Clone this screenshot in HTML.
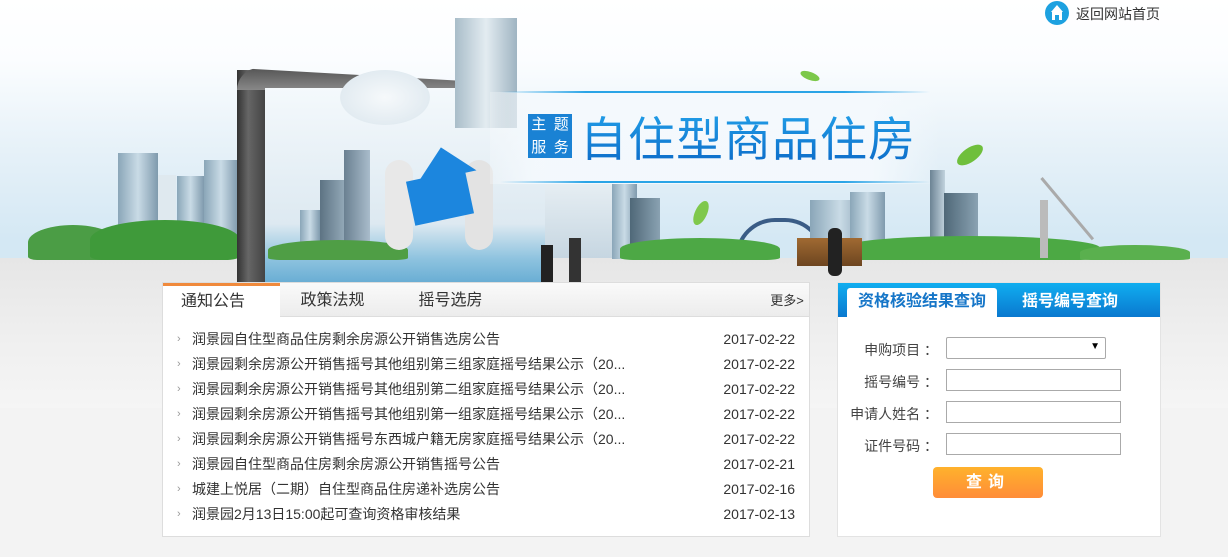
<!DOCTYPE html>
<html><head><meta charset="utf-8">
<style>
*{margin:0;padding:0;box-sizing:border-box}
body{width:1228px;height:557px;overflow:hidden;position:relative;font-family:"Liberation Sans","Noto Sans CJK SC",sans-serif;background:#f3f3f3}
.abs{position:absolute}
.sky{left:0;top:0;width:1228px;height:260px;background:linear-gradient(#fff 0,#fbfdff 60px,#e6f1f8 150px,#d4e8f4 240px)}
.ground{left:0;top:258px;width:1228px;height:150px;background:linear-gradient(#e6e6e6,#efefef 80px,#f5f5f5)}
.bld{position:absolute;background:linear-gradient(90deg,#8aa6b8,#c9dbe6 50%,#7f9aad);}
.tree{position:absolute;border-radius:50% 50% 10% 10%;background:#3f9a3a}
.panel{left:162px;top:282px;width:648px;height:255px;background:#fff;border:1px solid #ddd}
.tabs{height:34px;background:linear-gradient(#fafafa,#ececec);border-bottom:1px solid #ddd;position:relative}
.tab{position:absolute;top:0;height:34px;line-height:36px;font-size:16px;color:#333;text-align:center}
.tab.on{background:#fff;border-top:3px solid #f08a3c;line-height:32px;height:35px;width:117px;left:0;text-align:left;padding-left:18px}
li{list-style:none;position:absolute;left:14px;width:618px;font-size:14px;color:#333;height:20px;line-height:20px}
li:before{content:"›";color:#999;font-size:11px;position:absolute;left:0}
li span.t{position:absolute;left:15px}
li span.d{position:absolute;right:0}
.rp{left:837px;top:282px;width:324px;height:255px;background:#fff;border:1px solid #e3e3e3}
.rh{height:34px;background:linear-gradient(#10aef0,#0a78cf);position:relative}
.rt{position:absolute;font-size:16px;font-weight:bold;top:5px;height:29px;line-height:27px;text-align:center;color:#fff}
.lbl{position:absolute;font-size:14px;color:#444;text-align:right;width:100px;left:0}
.inp{position:absolute;left:108px;width:175px;height:22px;border:1px solid #aaa;background:#fff}
</style></head><body>
<div class="abs sky"></div>
<div class="abs ground"></div>
<!-- left city -->
<div class="bld" style="left:118px;top:153px;width:40px;height:90px"></div>
<div class="bld" style="left:158px;top:175px;width:18px;height:70px;background:#dfe9ef"></div>
<div class="bld" style="left:177px;top:176px;width:27px;height:70px"></div>
<div class="bld" style="left:204px;top:160px;width:34px;height:85px"></div>
<div class="tree" style="left:28px;top:225px;width:90px;height:35px;background:#4b9d45"></div>
<div class="tree" style="left:90px;top:220px;width:150px;height:40px"></div>
<!-- frame -->
<div class="abs" style="left:237px;top:70px;width:28px;height:212px;background:linear-gradient(90deg,#333,#666 40%,#444)"></div>
<div class="abs" style="left:237px;top:68px;width:270px;height:22px;border-radius:24px 0 0 0;background:linear-gradient(#555,#888);clip-path:polygon(0 0,100% 70%,100% 100%,0 100%)"></div>
<div class="abs" style="left:265px;top:88px;width:280px;height:194px;background:linear-gradient(#f4f9fc,#dde9f1 70%,#8ec3df 88%,#6aaed4)"></div>
<div class="bld" style="left:300px;top:210px;width:20px;height:45px"></div>
<div class="bld" style="left:320px;top:180px;width:28px;height:75px;background:linear-gradient(90deg,#5d7383,#9ab0bf)"></div>
<div class="bld" style="left:344px;top:150px;width:26px;height:105px;background:linear-gradient(90deg,#6a8091,#a9bccb)"></div>
<div class="tree" style="left:268px;top:240px;width:140px;height:20px;background:#4f9e45"></div>
<!-- tower top -->
<div class="bld" style="left:455px;top:18px;width:62px;height:110px;background:linear-gradient(90deg,#a9bdc9,#e3ecf1 50%,#9fb4c2)"></div>
<div class="abs" style="left:340px;top:70px;width:90px;height:55px;border-radius:50%;background:radial-gradient(#f6f9fb,#e2ebf1 70%,transparent 72%)"></div>
<!-- figures with house -->
<div class="abs" style="left:385px;top:160px;width:28px;height:90px;border-radius:14px;background:#e8e8e8"></div>
<div class="abs" style="left:465px;top:160px;width:28px;height:90px;border-radius:14px;background:#e3e3e3"></div>
<div class="abs" style="left:410px;top:175px;width:60px;height:45px;background:#1c86de;transform:rotate(-12deg)"></div>
<div class="abs" style="left:414px;top:147px;width:0;height:0;border-left:30px solid transparent;border-right:30px solid transparent;border-bottom:30px solid #1c86de;transform:rotate(-12deg)"></div>
<!-- banner band -->
<div class="abs" style="left:490px;top:92px;width:450px;height:92px;background:linear-gradient(90deg,rgba(255,255,255,.2),rgba(244,249,253,.95) 10%,rgba(244,249,253,.95) 85%,rgba(255,255,255,0))"></div>
<div class="abs" style="left:500px;top:91px;width:430px;height:2px;background:linear-gradient(90deg,transparent,#2aa4e6 20%,#2aa4e6 80%,transparent)"></div>
<div class="abs" style="left:500px;top:181px;width:430px;height:2px;background:linear-gradient(90deg,transparent,#2aa4e6 20%,#2aa4e6 80%,transparent)"></div>
<div class="abs" style="left:528px;top:114px;width:44px;height:44px;background:#1a82d4;border-radius:3px;color:#fff;font-size:15px;line-height:21px;display:grid;grid-template-columns:1fr 1fr;text-align:center;gap:1px">
<div style="background:#1a82d4">主</div><div style="background:#1a82d4">题</div><div style="background:#1a82d4">服</div><div style="background:#1a82d4">务</div></div>
<div class="abs" style="left:580px;top:108px;font-size:47px;color:#1588d8;line-height:56px;letter-spacing:1px;font-family:'Noto Sans CJK SC',sans-serif;background:linear-gradient(#23a2ea,#0c6cc9);-webkit-background-clip:text;color:transparent">自住型商品住房</div>
<!-- right city -->
<div class="abs" style="left:545px;top:184px;width:75px;height:74px;background:linear-gradient(#e6eef3,#c6d6e1)"></div>
<div class="bld" style="left:612px;top:184px;width:25px;height:75px"></div>
<div class="bld" style="left:630px;top:198px;width:30px;height:60px;background:linear-gradient(90deg,#4f6878,#8aa2b2)"></div>
<div class="abs" style="left:735px;top:218px;width:90px;height:40px;border-radius:45px 45px 0 0;border:4px solid #3a5c86;border-bottom:none"></div>
<div class="bld" style="left:810px;top:200px;width:60px;height:58px"></div>
<div class="bld" style="left:850px;top:192px;width:35px;height:66px"></div>
<div class="bld" style="left:930px;top:170px;width:15px;height:88px;background:linear-gradient(90deg,#6c8394,#c1d2dd)"></div>
<div class="bld" style="left:944px;top:193px;width:34px;height:65px;background:linear-gradient(90deg,#4f6878,#8aa2b2)"></div>
<div class="tree" style="left:620px;top:238px;width:160px;height:22px;background:#4da845"></div>
<div class="tree" style="left:840px;top:236px;width:260px;height:24px;background:#4ca944"></div>
<div class="tree" style="left:1080px;top:245px;width:110px;height:15px;background:#5ab04e"></div>
<div class="abs" style="left:1040px;top:178px;width:3px;height:80px;background:#aaa;transform:rotate(-40deg);transform-origin:top"></div>
<div class="abs" style="left:1040px;top:200px;width:8px;height:58px;background:#bbb"></div>
<div class="abs" style="left:797px;top:238px;width:65px;height:28px;background:linear-gradient(#a06a32,#6d4520)"></div>
<div class="abs" style="left:828px;top:228px;width:14px;height:48px;background:#222;border-radius:6px"></div>
<div class="abs" style="left:541px;top:245px;width:12px;height:38px;background:#222"></div>
<div class="abs" style="left:569px;top:238px;width:12px;height:44px;background:#333"></div>
<!-- leaves -->
<div class="abs" style="left:800px;top:72px;width:20px;height:8px;background:#7cc84a;border-radius:50%;transform:rotate(20deg)"></div>
<div class="abs" style="left:955px;top:148px;width:30px;height:14px;background:#6fbf3c;border-radius:50%;transform:rotate(-35deg)"></div>
<div class="abs" style="left:695px;top:200px;width:12px;height:26px;background:#7fc84c;border-radius:50%;transform:rotate(25deg)"></div>
<!-- home link -->
<div class="abs" style="left:1045px;top:1px;width:24px;height:24px;border-radius:50%;background:#1da1e0"></div>
<div class="abs" style="left:1051px;top:5px;width:0;height:0;border-left:6px solid transparent;border-right:6px solid transparent;border-bottom:7px solid #fff"></div>
<div class="abs" style="left:1052px;top:12px;width:10px;height:8px;background:#fff"></div>
<div class="abs" style="left:1055px;top:15px;width:4px;height:5px;background:#1da1e0"></div>
<div class="abs" style="left:1076px;top:4px;font-size:14px;color:#333">返回网站首页</div>

<!-- news panel -->
<div class="abs panel">
 <div class="tabs">
  <div class="tab on">通知公告</div>
  <div class="tab" style="left:117px;width:105px">政策法规</div>
  <div class="tab" style="left:235px;width:105px">摇号选房</div>
  <div class="tab" style="right:2px;font-size:13px;width:40px">更多&gt;</div>
 </div>
 <ul>
  <li style="top:46px"><span class="t">润景园自住型商品住房剩余房源公开销售选房公告</span><span class="d">2017-02-22</span></li>
  <li style="top:71px"><span class="t">润景园剩余房源公开销售摇号其他组别第三组家庭摇号结果公示（20...</span><span class="d">2017-02-22</span></li>
  <li style="top:96px"><span class="t">润景园剩余房源公开销售摇号其他组别第二组家庭摇号结果公示（20...</span><span class="d">2017-02-22</span></li>
  <li style="top:121px"><span class="t">润景园剩余房源公开销售摇号其他组别第一组家庭摇号结果公示（20...</span><span class="d">2017-02-22</span></li>
  <li style="top:146px"><span class="t">润景园剩余房源公开销售摇号东西城户籍无房家庭摇号结果公示（20...</span><span class="d">2017-02-22</span></li>
  <li style="top:171px"><span class="t">润景园自住型商品住房剩余房源公开销售摇号公告</span><span class="d">2017-02-21</span></li>
  <li style="top:196px"><span class="t">城建上悦居（二期）自住型商品住房递补选房公告</span><span class="d">2017-02-16</span></li>
  <li style="top:221px"><span class="t">润景园2月13日15:00起可查询资格审核结果</span><span class="d">2017-02-13</span></li>
 </ul>
</div>

<!-- query panel -->
<div class="abs rp">
 <div class="rh">
  <div class="rt" style="left:9px;width:150px;background:#fff;color:#1676c8;border-radius:3px 3px 0 0">资格核验结果查询</div>
  <div class="rt" style="left:172px;width:120px">摇号编号查询</div>
 </div>
 <div class="lbl" style="top:57px">申购项目 ：</div>
 <div class="inp" style="top:54px;width:160px;border-radius:2px"><span style="position:absolute;right:5px;top:3px;font-size:10px">▼</span></div>
 <div class="lbl" style="top:89px">摇号编号 ：</div>
 <div class="inp" style="top:86px"></div>
 <div class="lbl" style="top:121px">申请人姓名 ：</div>
 <div class="inp" style="top:118px"></div>
 <div class="lbl" style="top:153px">证件号码 ：</div>
 <div class="inp" style="top:150px"></div>
 <div class="abs" style="left:95px;top:184px;width:110px;height:31px;border-radius:4px;background:linear-gradient(#ffb22c,#ff8c38);color:#fff;font-size:16px;font-weight:bold;text-align:center;line-height:31px;letter-spacing:6px">查询</div>
</div>
</body></html>
